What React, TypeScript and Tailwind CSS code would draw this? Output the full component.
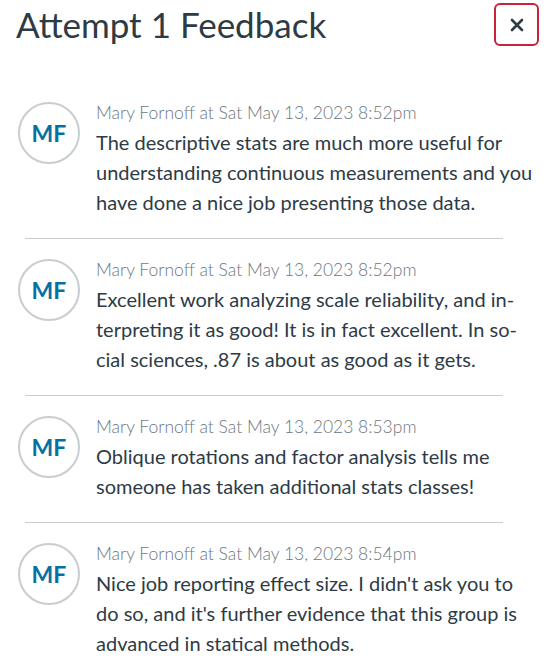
import React from 'react';

const comments = [
  {
    id: 1,
    date: 'Sat May 13, 2023 8:52pm',
    text: 'The descriptive stats are much more useful for understanding continuous measurements and you have done a nice job presenting those data.',
  },
  {
    id: 2,
    date: 'Sat May 13, 2023 8:52pm',
    text: 'Excellent work analyzing scale reliability, and in\u00ADterpreting it as good! It is in fact excellent. In so\u00ADcial sciences, .87 is about as good as it gets.',
  },
  {
    id: 3,
    date: 'Sat May 13, 2023 8:53pm',
    text: 'Oblique rotations and factor analysis tells me someone has taken additional stats classes!',
  },
  {
    id: 4,
    date: 'Sat May 13, 2023 8:54pm',
    text: "Nice job reporting effect size. I didn't ask you to do so, and it's further evidence that this group is advanced in statical methods.",
  },
];

const App = () => {
  return (
    <div className="min-h-screen bg-white font-['Lato','Liberation_Sans',sans-serif] text-[#2d3b45]">
      <div className="flex items-start justify-between pl-4 pr-2 pt-[3px]">
        <h1 className="text-[35px] leading-[42px] font-normal">Attempt 1 Feedback</h1>
        <button className="flex h-[43px] w-[45px] items-center justify-center rounded-md border-2 border-[#c4243d] bg-white">
          <svg width="14" height="14" viewBox="0 0 14 14">
            <path d="M2 2 L12 12 M12 2 L2 12" stroke="#2d3b45" strokeWidth="2.6" strokeLinecap="round" />
          </svg>
        </button>
      </div>

      <div className="mt-[52px]">
        {comments.map((c, i) => (
          <div key={c.id}>
            {i > 0 && <div className="ml-[25px] w-[478px] border-t border-[#c7cdd1]" />}
            <div className={`flex gap-4 pl-[18px] pr-3 ${i > 0 ? 'pt-[16px]' : ''} pb-[21px]`}>
              <div className="mt-[4px] flex h-[62px] w-[62px] shrink-0 items-center justify-center rounded-full border-2 border-[#c7cdd1]">
                <span className="text-[23px] font-bold text-[#0770a3]">MF</span>
              </div>
              <div className="min-w-0 flex-1">
                <div className="text-[17.5px] leading-[29px] font-light text-[#6b7780]">
                  Mary Fornoff at {c.date}
                </div>
                <p className="text-[20px] leading-[30px]">{c.text}</p>
              </div>
            </div>
          </div>
        ))}
      </div>
    </div>
  );
};

export default App;
